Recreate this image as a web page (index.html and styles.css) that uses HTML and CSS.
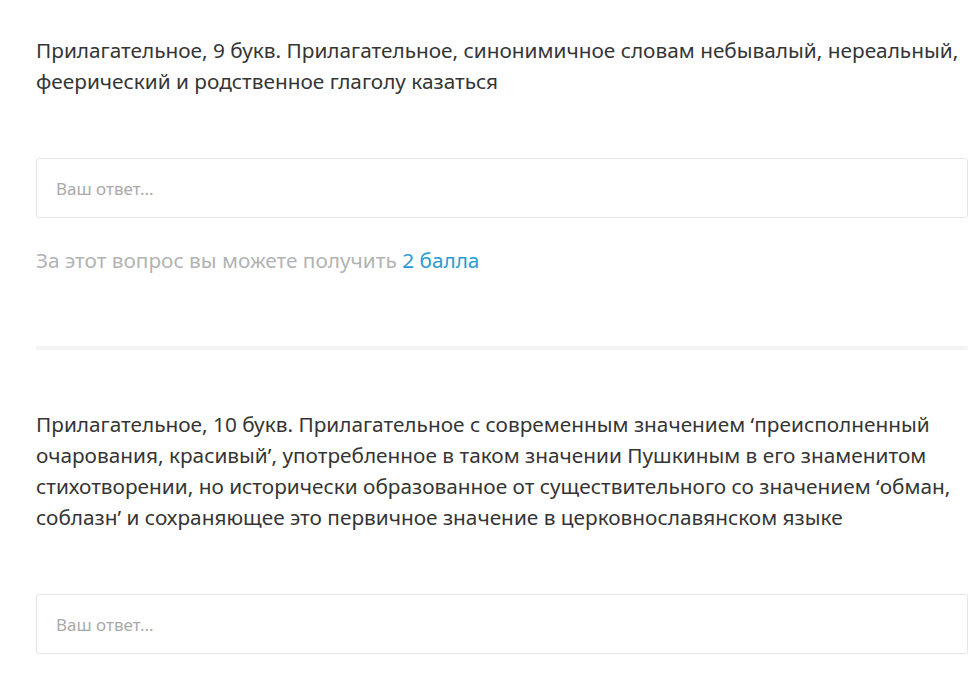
FILE: index.html
```html
<!DOCTYPE html>
<html lang="ru">
<head>
    <meta charset="UTF-8">
    <title>Вопросы</title>
    <link rel="stylesheet" href="styles.css">
</head>
<body>
    <div class="quiz">
        <div class="question">
            <div class="question-text">Прилагательное, 9 букв. Прилагательное, синонимичное словам небывалый, нереальный, феерический и родственное глаголу казаться</div>
            <input class="answer-input" type="text" placeholder="Ваш ответ...">
            <div class="question-score">За этот вопрос вы можете получить <span class="score-value">2 балла</span></div>
        </div>

        <div class="question-separator"></div>

        <div class="question">
            <div class="question-text">Прилагательное, 10 букв. Прилагательное с современным значением ‘преисполненный очарования, красивый’, употребленное в таком значении Пушкиным в его знаменитом стихотворении, но исторически образованное от существительного со значением ‘обман, соблазн’ и сохраняющее это первичное значение в церковнославянском языке</div>
            <input class="answer-input" type="text" placeholder="Ваш ответ...">
            <div class="question-score">За этот вопрос вы можете получить <span class="score-value">2 балла</span></div>
        </div>
    </div>
</body>
</html>
```

FILE: styles.css
```css
* {
    margin: 0;
    padding: 0;
    box-sizing: border-box;
}

body {
    font-family: "Noto Sans", "Open Sans", sans-serif;
    background: #fff;
    color: #333;
    overflow: hidden;
}

.quiz {
    margin: 0 4px 0 36px;
    padding-top: 35px;
}

.question-text {
    font-size: 20.8px;
    line-height: 31px;
    color: #353535;
}

.answer-input {
    display: block;
    width: 100%;
    height: 60px;
    margin-top: 61px;
    padding: 0 19px;
    border: 1px solid #e6e6e6;
    border-radius: 3px;
    font-family: inherit;
    font-size: 17px;
    color: #333;
    outline: none;
}

.answer-input::placeholder {
    color: #aaa;
}

.question-score {
    margin-top: 27px;
    font-size: 20.8px;
    line-height: 31px;
    color: #b3b3b3;
}

.score-value {
    color: #2b9bd1;
}

/* Разделитель */
.question-separator {
    height: 4px;
    margin: 70px 0 59px;
    background: #f4f4f4;
    border-radius: 2px;
}
```
